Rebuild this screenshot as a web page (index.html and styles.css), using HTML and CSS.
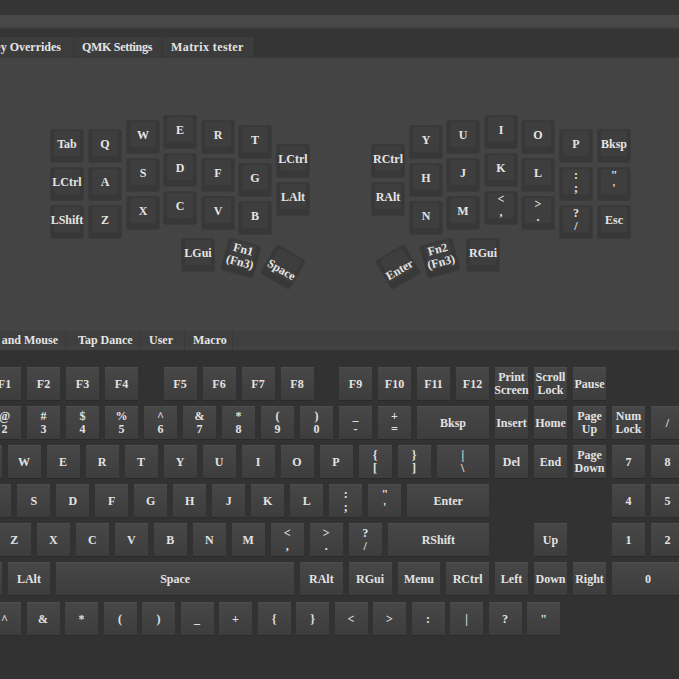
FILE: index.html
```html
<!DOCTYPE html>
<html>
<head>
<meta charset="utf-8">
<title>Vial - Keymap</title>
<link rel="stylesheet" href="styles.css">
</head>
<body>
<div class="bar-dark"></div>
<div class="bar-light"></div>
<div class="bar-gap"></div>

<nav class="tabs tabs-top">
  <div class="tab tab-cut t-ko"><span>Key Overrides</span></div>
  <div class="tab t-qmk">QMK Settings</div>
  <div class="tab t-mt active">Matrix tester</div>
</nav>

<section class="panel">
  <!-- left half -->
  <div class="sk" style="left:50px;top:71px"><span>Tab</span></div>
  <div class="sk" style="left:50px;top:109px"><span>LCtrl</span></div>
  <div class="sk" style="left:50px;top:147px"><span>LShift</span></div>
  <div class="sk" style="left:88px;top:71px"><span>Q</span></div>
  <div class="sk" style="left:88px;top:109px"><span>A</span></div>
  <div class="sk" style="left:88px;top:147px"><span>Z</span></div>
  <div class="sk" style="left:126px;top:62px"><span>W</span></div>
  <div class="sk" style="left:126px;top:100px"><span>S</span></div>
  <div class="sk" style="left:126px;top:138px"><span>X</span></div>
  <div class="sk" style="left:163px;top:57px"><span>E</span></div>
  <div class="sk" style="left:163px;top:95px"><span>D</span></div>
  <div class="sk" style="left:163px;top:133px"><span>C</span></div>
  <div class="sk" style="left:201px;top:62px"><span>R</span></div>
  <div class="sk" style="left:201px;top:100px"><span>F</span></div>
  <div class="sk" style="left:201px;top:138px"><span>V</span></div>
  <div class="sk" style="left:238px;top:67px"><span>T</span></div>
  <div class="sk" style="left:238px;top:105px"><span>G</span></div>
  <div class="sk" style="left:238px;top:143px"><span>B</span></div>
  <div class="sk" style="left:276px;top:86px"><span>LCtrl</span></div>
  <div class="sk" style="left:276px;top:124px"><span>LAlt</span></div>
  <div class="sk" style="left:181px;top:180px"><span>LGui</span></div>
  <div class="sk" style="left:224px;top:183px;transform:rotate(15deg)"><span class="two"><i>Fn1</i><i>(Fn3)</i></span></div>
  <div class="sk" style="left:266px;top:192px;transform:rotate(30deg)"><span class="low">Space</span></div>

  <!-- right half -->
  <div class="sk" style="left:371px;top:86px"><span>RCtrl</span></div>
  <div class="sk" style="left:371px;top:124px"><span>RAlt</span></div>
  <div class="sk" style="left:409px;top:67px"><span>Y</span></div>
  <div class="sk" style="left:409px;top:105px"><span>H</span></div>
  <div class="sk" style="left:409px;top:143px"><span>N</span></div>
  <div class="sk" style="left:446px;top:62px"><span>U</span></div>
  <div class="sk" style="left:446px;top:100px"><span>J</span></div>
  <div class="sk" style="left:446px;top:138px"><span>M</span></div>
  <div class="sk" style="left:484px;top:57px"><span>I</span></div>
  <div class="sk" style="left:484px;top:95px"><span>K</span></div>
  <div class="sk" style="left:484px;top:133px"><span class="two"><i>&lt;</i><i>,</i></span></div>
  <div class="sk" style="left:521px;top:62px"><span>O</span></div>
  <div class="sk" style="left:521px;top:100px"><span>L</span></div>
  <div class="sk" style="left:521px;top:138px"><span class="two"><i>&gt;</i><i>.</i></span></div>
  <div class="sk" style="left:559px;top:71px"><span>P</span></div>
  <div class="sk" style="left:559px;top:109px"><span class="two"><i>:</i><i>;</i></span></div>
  <div class="sk" style="left:559px;top:147px"><span class="two"><i>?</i><i>/</i></span></div>
  <div class="sk" style="left:597px;top:71px"><span>Bksp</span></div>
  <div class="sk" style="left:597px;top:109px"><span class="two"><i>"</i><i>'</i></span></div>
  <div class="sk" style="left:597px;top:147px"><span>Esc</span></div>
  <div class="sk" style="left:466px;top:180px"><span>RGui</span></div>
  <div class="sk" style="left:423px;top:183px;transform:rotate(-15deg)"><span class="two"><i>Fn2</i><i>(Fn3)</i></span></div>
  <div class="sk" style="left:381px;top:192px;transform:rotate(-30deg)"><span class="low">Enter</span></div>
</section>

<nav class="tabs tabs-bottom">
  <div class="tab tab-cut b-amm"><span>App, Media and Mouse</span></div>
  <div class="tab b-td">Tap Dance</div>
  <div class="tab b-user">User</div>
  <div class="tab b-macro">Macro</div>
</nav>

<section class="board">
  <div class="row">
    <div class="key">Esc</div>
    <div class="gap u1"></div>
    <div class="key">F1</div><div class="key">F2</div><div class="key">F3</div><div class="key">F4</div>
    <div class="gap u05"></div>
    <div class="key">F5</div><div class="key">F6</div><div class="key">F7</div><div class="key">F8</div>
    <div class="gap u05"></div>
    <div class="key">F9</div><div class="key">F10</div><div class="key">F11</div><div class="key">F12</div>
    <div class="key two"><i>Print</i><i>Screen</i></div>
    <div class="key two"><i>Scroll</i><i>Lock</i></div>
    <div class="key">Pause</div>
  </div>

  <div class="row">
    <div class="key two"><i>~</i><i>`</i></div>
    <div class="key two"><i>!</i><i>1</i></div>
    <div class="key two"><i>@</i><i>2</i></div>
    <div class="key two"><i>#</i><i>3</i></div>
    <div class="key two"><i>$</i><i>4</i></div>
    <div class="key two"><i>%</i><i>5</i></div>
    <div class="key two"><i>^</i><i>6</i></div>
    <div class="key two"><i>&amp;</i><i>7</i></div>
    <div class="key two"><i>*</i><i>8</i></div>
    <div class="key two"><i>(</i><i>9</i></div>
    <div class="key two"><i>)</i><i>0</i></div>
    <div class="key two"><i>_</i><i>-</i></div>
    <div class="key two"><i>+</i><i>=</i></div>
    <div class="key w2">Bksp</div>
    <div class="key">Insert</div>
    <div class="key">Home</div>
    <div class="key two"><i>Page</i><i>Up</i></div>
    <div class="key two"><i>Num</i><i>Lock</i></div>
    <div class="key">/</div>
  </div>

  <div class="row">
    <div class="key w15">Tab</div>
    <div class="key">Q</div><div class="key">W</div><div class="key">E</div><div class="key">R</div>
    <div class="key">T</div><div class="key">Y</div><div class="key">U</div><div class="key">I</div>
    <div class="key">O</div><div class="key">P</div>
    <div class="key two"><i>{</i><i>[</i></div>
    <div class="key two"><i>}</i><i>]</i></div>
    <div class="key two w15"><i>|</i><i>\</i></div>
    <div class="key">Del</div>
    <div class="key">End</div>
    <div class="key two"><i>Page</i><i>Down</i></div>
    <div class="key">7</div>
    <div class="key">8</div>
  </div>

  <div class="row">
    <div class="key w175">Caps Lock</div>
    <div class="key">A</div><div class="key">S</div><div class="key">D</div><div class="key">F</div>
    <div class="key">G</div><div class="key">H</div><div class="key">J</div><div class="key">K</div>
    <div class="key">L</div>
    <div class="key two"><i>:</i><i>;</i></div>
    <div class="key two"><i>"</i><i>'</i></div>
    <div class="key w225">Enter</div>
    <div class="gap u3"></div>
    <div class="key">4</div>
    <div class="key">5</div>
  </div>

  <div class="row">
    <div class="key w225">LShift</div>
    <div class="key">Z</div><div class="key">X</div><div class="key">C</div><div class="key">V</div>
    <div class="key">B</div><div class="key">N</div><div class="key">M</div>
    <div class="key two"><i>&lt;</i><i>,</i></div>
    <div class="key two"><i>&gt;</i><i>.</i></div>
    <div class="key two"><i>?</i><i>/</i></div>
    <div class="key w275">RShift</div>
    <div class="gap u1"></div>
    <div class="key">Up</div>
    <div class="gap u1"></div>
    <div class="key">1</div>
    <div class="key">2</div>
  </div>

  <div class="row">
    <div class="key w125">LCtrl</div>
    <div class="key w125">LGui</div>
    <div class="key w125">LAlt</div>
    <div class="key w625">Space</div>
    <div class="key w125">RAlt</div>
    <div class="key w125">RGui</div>
    <div class="key w125">Menu</div>
    <div class="key w125">RCtrl</div>
    <div class="key">Left</div>
    <div class="key">Down</div>
    <div class="key">Right</div>
    <div class="key w2">0</div>
  </div>

  <div class="row symbols">
    <div class="key">^</div>
    <div class="key">&amp;</div>
    <div class="key">*</div>
    <div class="key">(</div>
    <div class="key">)</div>
    <div class="key">_</div>
    <div class="key">+</div>
    <div class="key">{</div>
    <div class="key">}</div>
    <div class="key">&lt;</div>
    <div class="key">&gt;</div>
    <div class="key">:</div>
    <div class="key">|</div>
    <div class="key">?</div>
    <div class="key">"</div>
  </div>
</section>
</body>
</html>
```

FILE: styles.css
```css
html, body {
  margin: 0;
  padding: 0;
}

body {
  width: 679px;
  height: 679px;
  overflow: hidden;
  background: #323232;
  color: #e4e4e4;
  font-family: "Liberation Serif", "Times New Roman", serif;
  font-weight: bold;
  font-size: 12px;
}

/* window chrome above the tab widgets */
.bar-dark {
  height: 15px;
  background: #353535;
}

.bar-light {
  height: 12px;
  background: #484848;
  border-bottom: 2px solid #3f3f3f;
}

.bar-gap {
  height: 8px;
  background: #353535;
}

/* tab strips */
.tabs {
  display: flex;
  height: 20px;
}

.tab {
  box-sizing: border-box;
  display: flex;
  align-items: center;
  padding-left: 8px;
  white-space: nowrap;
  overflow: hidden;
  background: #3c3c3c;
  border-right: 1px solid #353535;
}

/* first tab is scrolled partly out of view: keep the end of its label */
.tab-cut {
  justify-content: flex-end;
  padding-left: 0;
}

.tabs-top {
  background: #353535;
  border-bottom: 1px solid #3a3a3a;
}

.tabs-top .tab {
  height: 20px;
}

.t-ko { width: 74px; padding-right: 12px; }
.t-qmk { width: 89px; letter-spacing: -0.3px; }
.t-mt { width: 92px; letter-spacing: 0.4px; border-right: 1px solid #2f2f2f; }

.tabs-bottom {
  height: 19px;
  background: #3f3f3f;
  box-shadow: inset 0 -4px 0 #424242;
}

.tabs-bottom .tab {
  background: transparent;
  border-right: 1px solid #383838;
}

.b-amm { width: 66px; padding-right: 7px; }
.b-td { width: 75px; padding-left: 12px; }
.b-user { width: 44px; }
.b-macro { width: 48px; }

/* split keyboard canvas */
.panel {
  position: relative;
  height: 273px;
  background: #444444;
}

.sk {
  position: absolute;
  width: 34px;
  height: 34px;
  box-sizing: border-box;
  background: #383838;
  border: 1px solid #3b3b3b;
  border-radius: 3px;
}

.sk::before {
  content: "";
  position: absolute;
  left: 3px;
  right: 3px;
  top: 1px;
  bottom: 6px;
  background: #3e3e3e;
  border-radius: 2px;
}

.sk span {
  position: relative;
  display: flex;
  flex-direction: column;
  align-items: center;
  justify-content: center;
  height: 27px;
  font-size: 12px;
  line-height: 12px;
}

.sk span.two {
  line-height: 13px;
  height: 28px;
}

.sk span.low {
  height: 38px;
}

.sk i,
.key i {
  font-style: normal;
  display: block;
}

/* full keyboard picker */
.board {
  padding-top: 17px;
  margin-left: -90px;
  height: 312px;
  background: #323232;
}

.row {
  display: flex;
  gap: 6px;
  margin-bottom: 6px;
}

.row.symbols {
  margin-top: 7px;
  margin-left: 78px;
  gap: 5.5px;
}

.key {
  box-sizing: border-box;
  flex: none;
  width: 33px;
  height: 33px;
  display: flex;
  flex-direction: column;
  align-items: center;
  justify-content: center;
  white-space: nowrap;
  font-size: 12px;
  line-height: 13px;
  background: linear-gradient(#474747, #3d3d3d);
  border-top: 1px solid #4d4d4d;
  box-shadow: 0 1px 0 #2a2a2a;
  color: #e2e2e2;
}

.gap {
  flex: none;
  height: 33px;
}

.u05 { width: 13.5px; }
.u1 { width: 33px; }
.u3 { width: 111px; }

.w125 { width: 42.75px; }
.w15 { width: 52.5px; }
.w175 { width: 62.25px; }
.w2 { width: 72px; }
.w225 { width: 81.75px; }
.w275 { width: 101.25px; }
.w625 { width: 237.75px; }
```
